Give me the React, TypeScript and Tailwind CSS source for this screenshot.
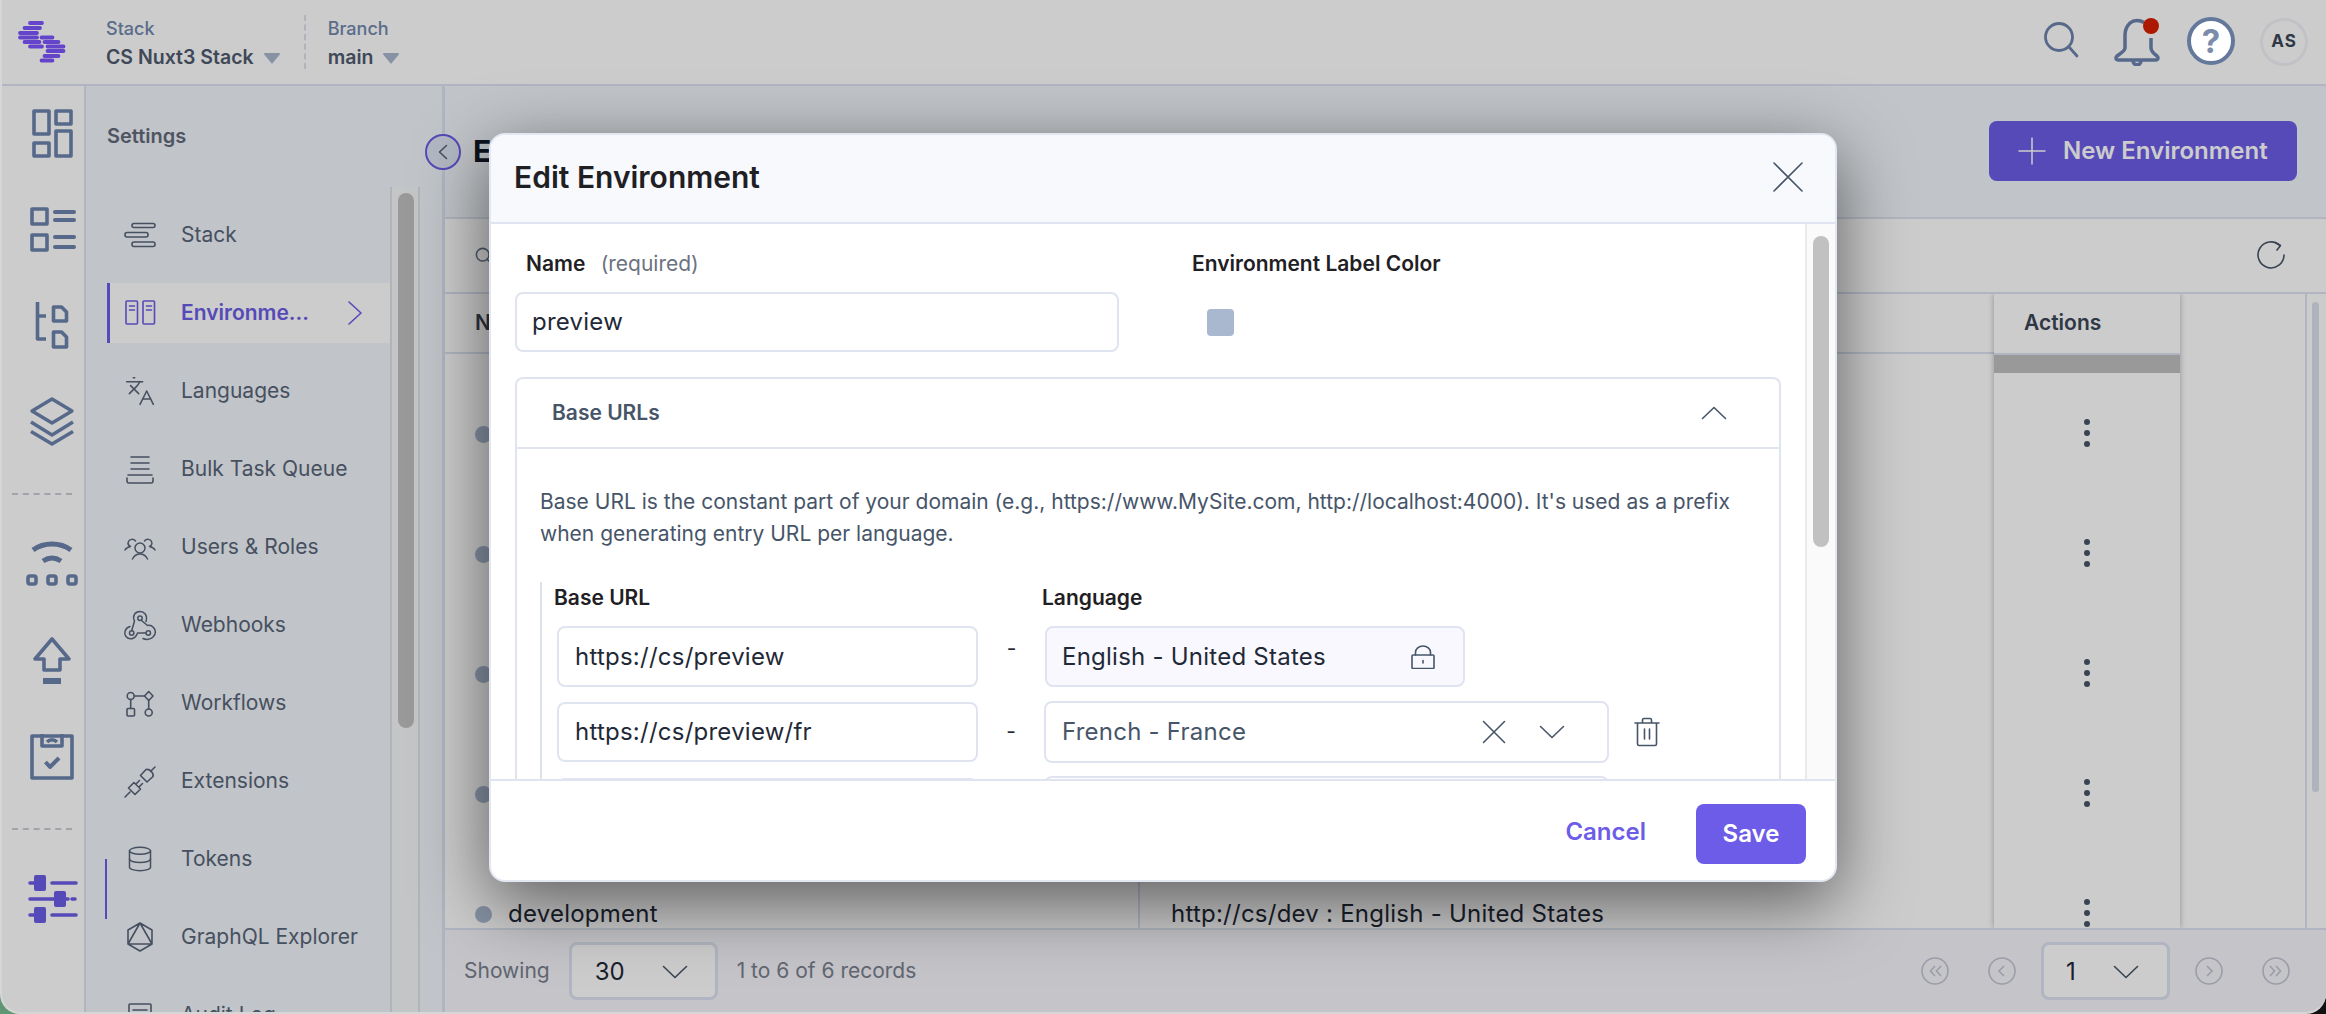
import type { ReactNode } from 'react';
import { Languages, Database, Search } from 'lucide-react';

const SLATE = '#586479';

// thin line icon, coordinates are px
function Ico({ w, h, color = '#475569', sw = 1.6, children, className = '' }: { w: number; h: number; color?: string; sw?: number; children: ReactNode; className?: string }) {
  return (
    <svg width={w} height={h} viewBox={`0 0 ${w} ${h}`} fill="none" stroke={color} strokeWidth={sw} strokeLinecap="round" strokeLinejoin="round" className={`shrink-0 ${className}`}>
      {children}
    </svg>
  );
}

const ChevronDown = ({ color = '#475569' }: { color?: string }) => (
  <Ico w={26} h={14} color={color}><path d="M1.5 1.5 13 12.5 24.5 1.5" /></Ico>
);

// rail icons use page coordinates so they are easy to compare with the screenshot
function RailSvg({ y, h, color = '#6c84ad', sw = 3.6, mt, children }: { y: number; h: number; color?: string; sw?: number; mt: string; children: ReactNode }) {
  return (
    <svg width={60} height={h} viewBox={`22 ${y} 60 ${h}`} fill="none" stroke={color} strokeWidth={sw} strokeLinejoin="round" className={`shrink-0 ml-5 ${mt}`}>
      {children}
    </svg>
  );
}

function Rail() {
  return (
    <div className="w-[84px] shrink-0 border-r-2 border-[#dde3f2] flex flex-col">
      <RailSvg y={107} h={52} mt="mt-[21px]">
        <rect x="34" y="111" width="15" height="23" /><rect x="56" y="111" width="15" height="13" />
        <rect x="34" y="143" width="15" height="13" /><rect x="56" y="131" width="15" height="25" />
      </RailSvg>
      <RailSvg y={205} h={48} mt="mt-[46px]">
        <rect x="32" y="209" width="15" height="15" /><rect x="32" y="235" width="15" height="15" />
        <path d="M55 212h19M55 220h19M55 237h19M55 247h19" strokeWidth={4} strokeLinecap="round" />
      </RailSvg>
      <RailSvg y={300} h={51} mt="mt-[47px]">
        <path d="M37.5 302v37h8.5M37.5 316h8.5" />
        <path d="M53.5 307h8l5 5v9h-13zM53.5 332h8l5 5v10h-13z" />
      </RailSvg>
      <RailSvg y={395} h={52} mt="mt-[44px]">
        <path d="M52 399 72 411 52 423 32 411z" strokeWidth={3.4} />
        <path d="M31 422 52 435 73 422M31 431.5 52 444 73 431.5" strokeWidth={3.4} />
      </RailSvg>
      <div className="mt-[46px] ml-[10px] w-[60px] border-t-2 border-dashed border-[#c8ccd4]" />
      <RailSvg y={539} h={49} mt="mt-[44px]">
        <path d="M33 550c11-8 27-8 38 0" strokeWidth={5} />
        <path d="M43 561c6-4 12-4 18 0" strokeWidth={5} />
        <rect x="28" y="576" width="8" height="8" rx="2" /><rect x="48" y="576" width="8" height="8" rx="2" /><rect x="68" y="576" width="8" height="8" rx="2" />
      </RailSvg>
      <RailSvg y={635} h={51} mt="mt-[47px]">
        <path d="M52 639 69 659H60V670H44V659H35z" />
        <path d="M43 681h18" strokeWidth={6} />
      </RailSvg>
      <RailSvg y={730} h={52} mt="mt-[44px]">
        <rect x="32" y="736" width="40" height="42" />
        <path d="M42 734v12h20v-12M47 742c3-3 7-3 10 0" />
        <path d="M45.5 762 50 767 59 758" strokeWidth={4} />
      </RailSvg>
      <div className="mt-[46px] ml-[10px] w-[60px] border-t-2 border-dashed border-[#c8ccd4]" />
      <RailSvg y={873} h={52} color="#6c5ce7" sw={3.6} mt="mt-[43px]">
        <path d="M30 883h5M52 883h24M30 899h25M66 899h2M72 899h3M30 915h5M52 915h24" strokeLinecap="round" />
        <rect x="34" y="875" width="12" height="16" rx="2" fill="#6c5ce7" stroke="none" />
        <rect x="54" y="891" width="12" height="16" rx="2" fill="#6c5ce7" stroke="none" />
        <rect x="34" y="907" width="12" height="16" rx="2" fill="#6c5ce7" stroke="none" />
      </RailSvg>
    </div>
  );
}

const NAV_ICONS: Record<string, ReactNode> = {
  Stack: (
    <Ico w={36} h={36} color={SLATE}>
      <rect x="10" y="6.5" width="23" height="4" rx="2" /><rect x="3" y="15.5" width="23" height="4.5" rx="2" /><rect x="10" y="25" width="23" height="4.5" rx="2" />
    </Ico>
  ),
  Environments: (
    <Ico w={36} h={36} color="#6c5ce7">
      <rect x="4" y="6" width="11.5" height="23" rx="1" /><rect x="21" y="6" width="11.5" height="23" rx="1" />
      <path d="M7.5 11h5M7.5 15h5M24.5 11h5M24.5 15h5" />
    </Ico>
  ),
  Languages: <Languages size={32} strokeWidth={1.15} color={SLATE} className="mx-[2px]" />,
  'Bulk Task Queue': (
    <Ico w={36} h={36} color={SLATE}>
      <path d="M9 6h18M9 12h18M9 18h18M6 24h24M5 27v3a2 2 0 0 0 2 2h22a2 2 0 0 0 2-2v-3" />
    </Ico>
  ),
  'Users & Roles': (
    <Ico w={36} h={36} color={SLATE} sw={1.5}>
      <circle cx="18" cy="19" r="5" />
      <path d="M10.5 30c1.5-3 4.5-5 7.5-5s6 2 7.5 5" />
      <path d="M3 21c1-2 3-3 5.5-3.5-2-1-3-3-2-5 1-2.5 5-3 7-.5" />
      <path d="M33 21c-1-2-3-3-5.5-3.5 2-1 3-3 2-5-1-2.5-5-3-7-.5" />
    </Ico>
  ),
  Webhooks: (
    <Ico w={36} h={36} color={SLATE} sw={1.5}>
      <circle cx="18" cy="11.3" r="2.2" /><circle cx="9.7" cy="26" r="2.2" /><circle cx="26.3" cy="26" r="2.2" />
      <path d="M24 14.5C26 8 22 4.5 18 4.5 13 4.5 10 9 12.5 14L9.7 23.8" />
      <path d="M8 19.5C3 21 1.5 26 4 29.5 7 33 13 33 15.5 26H24.1" />
      <path d="M21 31.5C25 33.5 31 32 33 27 34.5 22 30 17.5 25.5 18.5L19.2 13.2" />
    </Ico>
  ),
  Workflows: (
    <Ico w={36} h={36} color={SLATE}>
      <circle cx="8.7" cy="11" r="3.5" />
      <path d="M26.7 6.5 31 11 26.7 15.5 22.5 11z" />
      <rect x="5" y="23.5" width="7.5" height="7.5" rx="1" />
      <circle cx="26.7" cy="27.5" r="3.5" />
      <path d="M12.2 11h10.3M8.7 14.5v9M26.7 15.5v8.5" />
    </Ico>
  ),
  Extensions: (
    <Ico w={36} h={36} color={SLATE}>
      <path d="M3 34 8 29M6.5 25 13 31.5 18.5 26 12 19.5zM14 21l3.5-3.5M17 24l3.5-3.5" />
      <path d="M18.5 12.5 25 19 31 13.5c1-3-3-8-7-7zM28.5 8.5 33 4" />
    </Ico>
  ),
  Tokens: <Database size={28} strokeWidth={1.3} color={SLATE} className="mx-1" />,
  'GraphQL Explorer': (
    <Ico w={36} h={36} color={SLATE}>
      <path d="M18 4 30 11V25L18 32 6 25V11zM18 4 30 25H6z" />
    </Ico>
  ),
  'Audit Log': (
    <Ico w={36} h={36} color={SLATE}>
      <rect x="7" y="7" width="22" height="24" rx="1" /><path d="M11 13h14" />
    </Ico>
  ),
};

function NavItem({ label }: { label: string }) {
  return (
    <div className="h-[60px] flex items-center pl-[15px] gap-[23px] text-[21px] text-[#586479] shrink-0">
      <span className="w-[36px] flex justify-center">{NAV_ICONS[label]}</span>
      <span className="whitespace-nowrap">{label}</span>
    </div>
  );
}

function SettingsPanel() {
  return (
    <div className="w-[359px] shrink-0 border-r-[3px] border-[#dde3f2] bg-[#f2f6fa] relative">
      <div className="absolute left-[19px] top-[773px] w-[2px] h-[60px] bg-[#6c5ce7]" />
      <div className="pl-[21px] pt-[36px] text-[20px] leading-[28px] font-semibold text-[#636a7c]">Settings</div>
      <div className="flex h-full">
        <div className="w-[283px] ml-[21px] mt-[55px] flex flex-col gap-[18px] shrink-0">
          <NavItem label="Stack" />
          <div className="h-[60px] flex items-center bg-white border-l-[3px] border-[#6c5ce7] pl-[12px] pr-[27px] gap-[23px] text-[21px] font-semibold text-[#6c5ce7] shrink-0">
            <span className="w-[36px] flex justify-center">{NAV_ICONS.Environments}</span>
            <span className="flex-1 whitespace-nowrap">Environme...</span>
            <Ico w={16} h={26} color="#6c5ce7"><path d="M2 2 14 13 2 24" /></Ico>
          </div>
          {['Languages', 'Bulk Task Queue', 'Users & Roles', 'Webhooks', 'Workflows', 'Extensions', 'Tokens', 'GraphQL Explorer', 'Audit Log'].map(l => <NavItem key={l} label={l} />)}
        </div>
        <div className="w-[30px] shrink-0 border-x-2 border-[#dfe2e6] bg-[#f6f7f8] mt-[37px] relative">
          <div className="ml-[6px] mt-[6px] w-4 h-[535px] rounded-full bg-[#c0c0c0]" />
        </div>
      </div>
    </div>
  );
}

const DOTS = [434, 554, 674, 794, 914];

function Dots() {
  return (
    <div className="flex flex-col gap-[5px] items-center">
      <span className="w-[6px] h-[6px] rounded-full bg-[#475569]" />
      <span className="w-[6px] h-[6px] rounded-full bg-[#475569]" />
      <span className="w-[6px] h-[6px] rounded-full bg-[#475569]" />
    </div>
  );
}

function PageCircle({ d, ml }: { d: string; ml: string }) {
  return (
    <svg width={28} height={28} viewBox="0 0 28 28" fill="none" stroke="#c2c6d2" strokeWidth={1.6} className={`shrink-0 ${ml}`}>
      <circle cx="14" cy="14" r="13" /><path d={d} />
    </svg>
  );
}

function MainArea() {
  return (
    <div className="flex-1 min-w-0 flex flex-col relative">
      <div className="absolute left-[-20px] top-[48px] w-9 h-9 rounded-full border-2 border-[#6c5ce7] bg-[#dfe7f4] flex items-center justify-center">
        <Ico w={10} h={16} color="#586479"><path d="M8.5 1.5 1.5 8 8.5 14.5" /></Ico>
      </div>
      <div className="h-[133px] shrink-0 border-b-2 border-[#dde3f2] bg-[#f2f6fa] flex items-center pl-[28px] pr-[29px] pb-[1px]">
        <div className="flex-1 text-[30px] font-bold text-[#111827]">Environments</div>
        <button className="w-[308px] h-[60px] rounded-[8px] bg-[#6c5ce7] flex items-center pl-[29px] gap-[17px] text-[24px] font-semibold text-white">
          <Ico w={28} h={28} color="#ffffff" sw={1.5}><path d="M14 1v26M1 14h26" /></Ico>
          New Environment
        </button>
      </div>
      <div className="h-[75px] shrink-0 border-b-2 border-[#dde3f2] bg-white flex items-center pl-[29px] pr-[40px] justify-between">
        <Search size={19} color="#64748b" />
        <svg width={30} height={30} viewBox="0 0 30 30" fill="none" stroke="#475569" strokeWidth={1.6} strokeLinecap="round" strokeLinejoin="round">
          <path d="M24 4.5A13 13 0 1 0 28 14" /><path d="M19 1.5 24.5 4.5 21 9" />
        </svg>
      </div>
      <div className="flex-1 min-h-0 flex overflow-hidden bg-white">
        <div className="flex-1 min-w-0 flex flex-col">
          <div className="h-[60px] shrink-0 border-b-2 border-[#dde3f2] flex items-center pl-[30px] text-[21px] font-semibold text-[#374151]">Name</div>
          <div className="h-[19px] shrink-0" />
          {DOTS.map((y, i) => (
            <div key={y} className="h-[120px] shrink-0 flex items-center text-[24px] tracking-[0.24px] text-[#1f2937]">
              <div className="w-[695px] h-full shrink-0 border-r-2 border-[#dde3f2] flex items-center pl-[30px] gap-[16px] pt-[2px]">
                <span className="w-[17px] h-[17px] rounded-full bg-[#a9b8cf]" />
                {i === 4 && 'development'}
              </div>
              {i === 4 && <span className="pl-[31px] pt-[2px]">http://cs/dev : English - United States</span>}
            </div>
          ))}
        </div>
        <div className="w-[186px] shrink-0 flex flex-col bg-white shadow-[0_0_6px_rgba(0,0,0,0.3)] relative">
          <div className="h-[61px] shrink-0 border-b-2 border-[#dde3f2] flex items-center pl-[30px] pb-[2px] text-[21px] font-semibold text-[#3b4657]">Actions</div>
          <div className="h-[18px] shrink-0 bg-[#c0c0c0]" />
          {DOTS.map(y => <div key={y} className="h-[120px] shrink-0 flex items-center justify-center"><Dots /></div>)}
        </div>
        <div className="w-[125px] shrink-0" />
        <div className="w-[21px] shrink-0 border-l-2 border-[#dde3f2] pt-[8px] pl-[5px]">
          <div className="w-[7px] h-[490px] rounded-full bg-[#dae0ec]" />
        </div>
      </div>
      <div className="h-[84px] shrink-0 border-t-2 border-[#dde3f2] bg-[#f5f5fc] flex items-center pl-[19px] pr-[36px] text-[21px]">
        <span className="text-[#7a808d]">Showing</span>
        <div className="ml-[19px] w-[149px] h-[58px] rounded-[8px] border-[3px] border-[#dde3f2] bg-white flex items-center justify-between pl-[23px] pr-[27px] pt-[2px] text-[24px] text-[#1f2937]">
          30<ChevronDown />
        </div>
        <span className="ml-[19px] text-[#7a808d]">1 to 6 of 6 records</span>
        <div className="flex-1" />
        <PageCircle ml="" d="M14 9 9.5 14 14 19M20 9 15.5 14 20 19" />
        <PageCircle ml="ml-[39px]" d="M16 9 11 14 16 19" />
        <div className="ml-[25px] w-[129px] h-[58px] rounded-[8px] border-[3px] border-[#dde3f2] bg-white flex items-center justify-between pl-[22px] pr-[28px] pt-[2px] text-[24px] text-[#1f2937]">
          1<ChevronDown />
        </div>
        <PageCircle ml="ml-[25px]" d="M12 9 17 14 12 19" />
        <PageCircle ml="ml-[39px]" d="M8 9 12.5 14 8 19M14 9 18.5 14 14 19" />
      </div>
    </div>
  );
}

function Caret() {
  return (
    <svg width={16} height={11} viewBox="0 0 16 11" fill="#a9b8cf" className="mt-[2px]">
      <path d="M1 0h14a1 1 0 0 1 .8 1.6L8.8 10a1 1 0 0 1-1.6 0L.2 1.6A1 1 0 0 1 1 0z" />
    </svg>
  );
}

function TopBar() {
  return (
    <div className="h-[86px] shrink-0 border-b-2 border-[#dde3f2] bg-white flex items-start relative">
      <svg width={50} height={42} viewBox="17 21 50 42" stroke="#7f56ff" strokeWidth={3.8} strokeLinecap="round" className="shrink-0 ml-[15px] mt-[21px]">
        <path d="M30 23h12M24.5 28h15.5M20 33h17M20 37.5h17M41.5 37.5h11M24.5 42h15M44.5 42h14M30 46.5h12M47.5 46.5h16M47.5 51h16M44.5 56h14M41.5 60.5h11" />
      </svg>
      <div className="ml-[39px] mt-[19px]">
        <div className="text-[18px] leading-[20px] font-medium text-[#7087ad]">Stack</div>
        <div className="mt-[4px] text-[19.5px] leading-[28px] font-semibold text-[#4f5a6e] flex items-center gap-[10px]">
          CS Nuxt3 Stack
          <Caret />
        </div>
      </div>
      <div className="ml-[24px] mt-[15px] h-[54px] border-l-2 border-dashed border-[#dbe0ea]" />
      <div className="ml-[22px] mt-[19px]">
        <div className="text-[18px] leading-[20px] font-medium text-[#7087ad]">Branch</div>
        <div className="mt-[4px] text-[19.5px] leading-[28px] font-semibold text-[#4f5a6e] flex items-center gap-[10px]">
          main
          <Caret />
        </div>
      </div>
      <div className="flex-1" />
      <svg width={36} height={36} viewBox="0 0 36 36" fill="none" stroke="#6c84ad" strokeWidth={2.8} strokeLinecap="round" className="mt-[22px] shrink-0">
        <circle cx="16" cy="15" r="13.5" /><path d="M26 25 34 34" />
      </svg>
      <div className="relative ml-[34px] mt-[18px] w-[48px] h-[48px] shrink-0">
        <svg width={48} height={48} viewBox="0 0 48 48" fill="none" stroke="#6c84ad" strokeWidth={3.5}>
          <path d="M31 4.5C27 2 21 1.5 17 5c-3 3-5 6-5 12v13c0 3-4 5-8 8-2 2-1 4 1 4h38c2 0 3-2 1-4-4-3-6-5-6-8V20" />
          <path d="M20 43c0 5 8 5 8 0" />
        </svg>
        <span className="absolute left-[30px] top-0 w-4 h-4 rounded-full bg-[#d92000]" />
      </div>
      <div className="relative z-30 ml-[26px] mt-[17px] w-[48px] h-[48px] rounded-full border-4 border-[#64789c] bg-white flex items-center justify-center text-[33px] leading-none font-bold text-[#7b8cab] shrink-0">?</div>
      <div className="ml-[25px] mt-[18px] mr-[18px] w-[48px] h-[48px] rounded-full border-[3px] border-[#f0f3f7] flex items-center justify-center text-[17px] font-bold tracking-[1px] text-[#3b4657] shrink-0">AS</div>
    </div>
  );
}

const FIELD = 'h-[60px] rounded-[8px] border-2 border-[#e0e4f0] flex items-center text-[24px] tracking-[0.24px] text-[#1f2937] shrink-0';

function Modal() {
  return (
    <div className="w-[1348px] h-[749px] rounded-[16px] border-2 border-[#e3e7f2] bg-white overflow-hidden flex flex-col shadow-[0_20px_70px_rgba(0,0,0,0.55)]">
      <div className="h-[89px] shrink-0 border-b-2 border-[#e0e4f0] bg-[#f7f9fd] flex items-center justify-between pl-[23px] pr-[32px] pb-[2px]">
        <div className="text-[30px] font-semibold text-[#1f2024]">Edit Environment</div>
        <Ico w={30} h={30} color="#475569" sw={1.6} className="mb-[2px]"><path d="M1 1 29 29M29 1 1 29" /></Ico>
      </div>
      <div className="flex-1 min-h-0 flex">
        <div className="flex-1 min-w-0 overflow-hidden pl-[24px] pt-[24px]">
          <div className="flex">
            <div className="w-[604px] shrink-0">
              <div className="pl-[11px] text-[21px] leading-[32px] font-semibold text-[#1f2024]">Name <span className="ml-[10px] font-normal text-[#6b7280]">(required)</span></div>
              <div className={`${FIELD} mt-[12px] pl-[15px]`}>preview</div>
            </div>
            <div className="ml-[73px]">
              <div className="text-[21px] leading-[32px] font-semibold text-[#1f2024]">Environment Label Color</div>
              <div className="mt-[29px] ml-[15px] w-[27px] h-[27px] rounded-[4px] bg-[#a9b8cf]" />
            </div>
          </div>
          <div className="mt-[25px] w-[1266px] rounded-t-[8px] border-2 border-[#e0e4f0]">
            <div className="h-[70px] border-b-2 border-[#e0e4f0] flex items-center justify-between pl-[35px] pr-[52px] text-[21px] font-semibold text-[#475569]">
              Base URLs
              <Ico w={26} h={14}><path d="M1.5 12.5 13 1.5 24.5 12.5" /></Ico>
            </div>
            <div className="pt-[37px] pl-[23px]">
              <div className="text-[21px] leading-[32px] text-[#475569]">
                Base URL is the constant part of your domain (e.g., https://www.MySite.com, http://localhost:4000). It's used as a prefix<br />
                when generating entry URL per language.
              </div>
              <div className="mt-[32px] border-l-2 border-[#dde2ea] pl-[12px]">
                <div className="flex text-[21px] leading-[32px] font-semibold text-[#1f2024]">
                  <span className="w-[488px]">Base URL</span><span>Language</span>
                </div>
                <div className="mt-[12px] flex items-center">
                  <div className={`${FIELD} !h-[61px] w-[421px] ml-[3px] pl-[16px]`}>https://cs/preview</div>
                  <span className="w-[67px] text-center text-[21px] text-[#1f2937] pb-[16px]">-</span>
                  <div className={`${FIELD} !h-[61px] w-[420px] bg-[#f8f8fe] pl-[15px] pr-[28px] justify-between`}>
                    English - United States
                    <Ico w={24} h={24}><rect x="1" y="10" width="22" height="13.5" rx="1" /><path d="M4.5 10V7.5a7.5 6.5 0 0 1 15 0V10M12 15.5v2.5" /></Ico>
                  </div>
                </div>
                <div className="mt-[14px] flex items-center">
                  <div className={`${FIELD} w-[421px] ml-[3px] pl-[16px]`}>https://cs/preview/fr</div>
                  <span className="w-[66px] text-center text-[21px] text-[#1f2937]">-</span>
                  <div className={`${FIELD} !h-[62px] w-[565px] pl-[16px] pr-[42px] !text-[#475569]`}>
                    <span className="flex-1">French - France</span>
                    <Ico w={24} h={24} className="mr-[33px]"><path d="M1.5 1.5 22.5 22.5M22.5 1.5 1.5 22.5" /></Ico>
                    <ChevronDown />
                  </div>
                  <Ico w={26} h={30} className="ml-[25px]"><path d="M1 6h24M3.5 6v21a1.5 1.5 0 0 0 1.5 1.5h16a1.5 1.5 0 0 0 1.5-1.5V6M8.5 6V3a1.5 1.5 0 0 1 1.5-1.5h6A1.5 1.5 0 0 1 17.5 3v3M10.5 12v10M15.5 12v10" /></Ico>
                </div>
                <div className="mt-[13px] flex">
                  <div className={`${FIELD} w-[421px] ml-[3px] mt-[2px]`} />
                  <div className={`${FIELD} w-[565px] ml-[66px]`} />
                </div>
              </div>
            </div>
          </div>
        </div>
        <div className="w-[30px] shrink-0 border-l-2 border-[#e8eaee] bg-[#fafafa] pl-[6px] pt-[12px]">
          <div className="w-4 h-[311px] rounded-full bg-[#c1c1c1]" />
        </div>
      </div>
      <div className="h-[101px] shrink-0 border-t-2 border-[#e0e4f0] flex items-center justify-end pr-[29px] pt-[7px] text-[24px] font-semibold">
        <span className="text-[#6c5ce7] mr-[50px] pb-[4px]">Cancel</span>
        <button className="w-[110px] h-[60px] rounded-[8px] bg-[#6c5ce7] text-white">Save</button>
      </div>
    </div>
  );
}

export default function App() {
  return (
    <div className="w-[2326px] h-[1014px] overflow-hidden bg-[linear-gradient(90deg,#5f9673_50%,#111111_50%)] font-['Inter',sans-serif]">
      <div className="relative w-full h-full rounded-b-[20px] border-l-2 border-b-2 border-[#d6d6d6] overflow-hidden bg-white flex flex-col">
        <TopBar />
        <div className="flex-1 min-h-0 flex">
          <Rail />
          <SettingsPanel />
          <MainArea />
        </div>
        <div className="absolute inset-0 z-20 bg-black/20 pl-[487px] pt-[133px]">
          <Modal />
        </div>
      </div>
    </div>
  );
}
